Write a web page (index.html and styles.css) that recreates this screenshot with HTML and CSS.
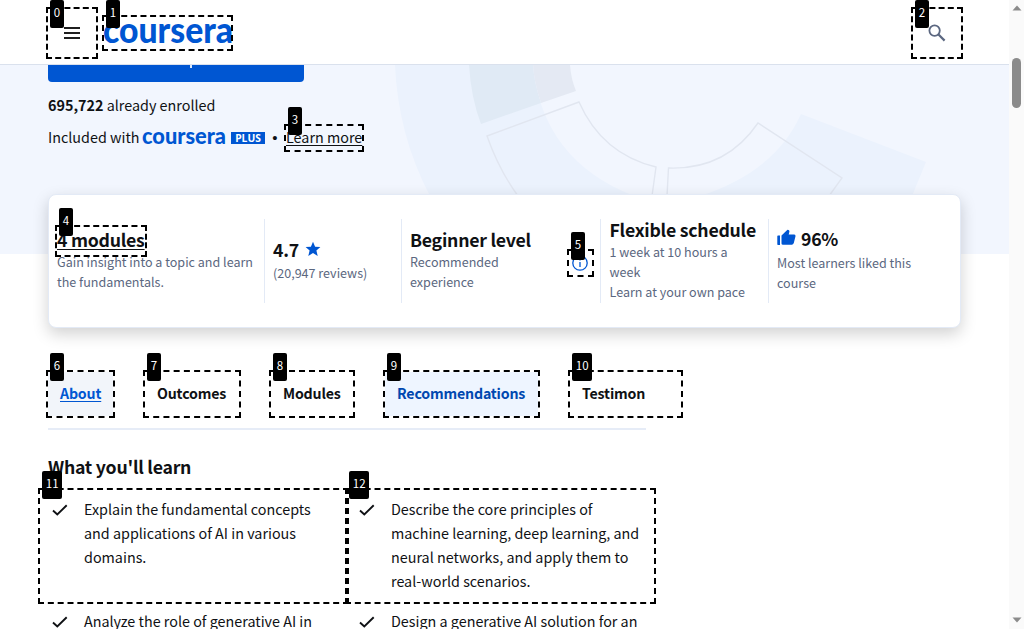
FILE: index.html
```html
<!DOCTYPE html>
<html lang="en">
<head>
<meta charset="utf-8">
<title>Course</title>
<link rel="stylesheet" href="styles.css">
</head>
<body>
<div class="window">
  <div class="page">
    <header class="header">
      <svg class="menu" width="18" height="14" viewBox="0 0 18 14"><path d="M1 2h16M1 7h16M1 12h16" stroke="#1f1f1f" stroke-width="1.8"/></svg>
      <svg class="logo" width="130" height="30"><text class="wordmark" x="-1" y="25" font-size="35.500" textLength="130" lengthAdjust="spacingAndGlyphs">coursera</text></svg>
      <svg class="search" width="18" height="18" viewBox="0 0 18 18" fill="none" stroke="#5b6780"><circle cx="6.6" cy="6.6" r="5.2" stroke-width="1.8"/><path d="M10.5 10.5L16.6 16.6" stroke-width="2.2"/></svg>
    </header>
    <section class="hero">
      <svg class="art" width="1009" height="189" viewBox="0 65 1009 189">
        <path d="M395 65Q398 135 430 196H634Q542 160 533 65Z" fill="#ebf2fd"/>
        <path d="M801 114L926 162 912 196H700Q775 172 801 114Z" fill="#ebf2fd"/>
        <path d="M469 65Q471 98 481 124L541 103Q534 82 533 65Z" fill="#e0eaf5"/>
        <path d="M533 65Q534 82 541 103L576 91Q571 79 570 65Z" fill="#e4e9f3"/>
        <g fill="none" stroke="#e1e6f0" stroke-width="1.4"><path d="M518 196Q499 170 487 136L579 102Q602 154 656 167L652 196M667 196L668.500 168Q726 170 758 123L842 178 829 196"/></g>
      </svg>
      <div class="enroll"><i class="stem"></i></div>
      <p class="line enrolled"><b>695,722</b> already enrolled</p>
      <p class="line included"><span class="inc">Included with</span>
        <svg class="small-logo" width="85" height="20"><text class="wordmark" x="0" y="16.500" font-size="23.500" textLength="84" lengthAdjust="spacingAndGlyphs">coursera</text></svg>
        <span class="plus">PLUS</span><span class="dot">•</span><a class="more">Learn more</a></p>
    </section>
    <section class="card">
      <div class="cell"><h3 class="modules">4 modules</h3><p>Gain insight into a topic and learn<br>the fundamentals.</p></div>
      <div class="cell"><h3 class="row">4.7 <svg width="16" height="16" viewBox="0 0 16 16"><path d="M8 .8l2.100 4.900 5.300.4-4 3.500 1.300 5.300L8 12.100l-4.700 2.800 1.300-5.300-4-3.500 5.300-.4z" fill="#0056d2"/></svg></h3><p class="down">(20,947 reviews)</p></div>
      <div class="cell"><h3>Beginner level</h3><div class="split"><p>Recommended<br>experience</p><svg class="info" width="16" height="16" viewBox="0 0 16 16"><circle cx="8" cy="8" r="7.200" fill="none" stroke="#0056d2" stroke-width="1.300"/><path d="M8 7v5M8 4v1.500" stroke="#0056d2" stroke-width="1.300"/></svg></div></div>
      <div class="cell flexible"><h3>Flexible schedule</h3><p>1 week at 10 hours a<br>week<br>Learn at your own pace</p></div>
      <div class="cell"><h3 class="row like"><svg width="19" height="17" viewBox="0 0 19 17" fill="#0056d2"><path d="M1 6.500h2v9.500H1Q.3 16 .3 15.300V7.200Q.3 6.500 1 6.500zM4.500 6.500L10.500.8Q13 1 12.300 3.300L11.700 5.500h5.600q1.400.1 1.200 1.800l-1.700 6.700q-.6 1.800-2 1.800H6q-1.500 0-1.500-1.400z"/></svg><span>96%</span></h3><p class="down">Most learners liked this<br>course</p></div>
    </section>
    <nav class="tabs">
      <a class="tab about">About</a><a class="tab outcomes">Outcomes</a><a class="tab mods">Modules</a><a class="tab recs">Recommendations</a><a class="tab test">Testimon</a>
    </nav>
    <section class="learn">
      <h2>What you'll learn</h2>
      <div class="points">
        <div class="point"><svg class="check" viewBox="0 0 16 12"><path d="M1 6.500L5.300 10.500 14.700 1.300"/></svg><p>Explain the fundamental concepts<br>and applications of AI in various<br>domains.</p></div>
        <div class="point"><svg class="check" viewBox="0 0 16 12"><path d="M1 6.500L5.300 10.500 14.700 1.300"/></svg><p>Describe the core principles of<br>machine learning, deep learning, and<br>neural networks, and apply them to<br>real-world scenarios.</p></div>
        <div class="point"><svg class="check" viewBox="0 0 16 12"><path d="M1 6.500L5.300 10.500 14.700 1.300"/></svg><p>Analyze the role of generative AI in</p></div>
        <div class="point"><svg class="check" viewBox="0 0 16 12"><path d="M1 6.500L5.300 10.500 14.700 1.300"/></svg><p>Design a generative AI solution for an</p></div>
      </div>
    </section>
  </div>
  <div class="scrollbar">
    <svg width="10" height="6" viewBox="0 0 10 6"><path d="M.5 5.500L5 .5l4.500 5z" fill="#8b8b8b"/></svg>
    <div class="thumb"></div>
    <svg width="10" height="6" viewBox="0 0 10 6"><path d="M.5.5L5 5.500 9.500.5z" fill="#8b8b8b"/></svg>
  </div>
  <div class="mark m0"><b class="high">0</b></div>
  <div class="mark m1"><b class="high">1</b></div>
  <div class="mark m2"><b class="high">2</b></div>
  <div class="mark m3"><b>3</b></div>
  <div class="mark m4"><b>4</b></div>
  <div class="mark m5"><b>5</b></div>
  <div class="mark m6"><b>6</b></div>
  <div class="mark m7"><b>7</b></div>
  <div class="mark m8"><b>8</b></div>
  <div class="mark m9"><b>9</b></div>
  <div class="mark m10"><b>10</b></div>
  <div class="mark m11"><b>11</b></div>
  <div class="mark m12"><b>12</b></div>
</div>
</body>
</html>
```
FILE: styles.css
```css
* { box-sizing: border-box; }
body { margin: 0; background: #fff; color: #0f1114; font-family: "Noto Sans CJK SC", "Noto Sans", sans-serif; font-size: 14.35px; line-height: 24px; }
p, h2, h3 { margin: 0; white-space: nowrap; }
svg { display: block; flex: none; overflow: visible; }
.window { position: relative; display: flex; width: 1024px; height: 629px; overflow: hidden; }
.page { width: 1009px; height: 629px; overflow: hidden; }
.header { display: flex; align-items: center; height: 65px; padding: 0 63px 0 63px; border-bottom: 1px solid #dae1ed; }
.menu, .search { margin-top: 2px; }
.logo { margin: 1px auto 0 23px; }
.wordmark { font-family: Lato, sans-serif; font-weight: 900; fill: #0056d2; }
.hero { position: relative; height: 189px; padding-left: 48px; background: #f2f6fe; }
.art { position: absolute; left: 0; top: 0; overflow: hidden; }
.enroll { position: relative; display: flex; justify-content: center; width: 256px; height: 17px; background: #0056d2; border-radius: 0 0 4px 4px; }
.stem { width: 2px; height: 3px; margin-left: 30px; background: #dce8fa; }
.line { position: relative; display: flex; align-items: center; height: 24px; white-space: pre; }
.enrolled { margin-top: 11px; }
.included { margin-top: 8px; }
.inc { width: 94px; }
.small-logo { width: 85px; }
.plus { width: 34px; height: 12px; margin: 1px 0 0 4px; background: #0056d2; color: #fff; font: bold 10.300px/12px "Open Sans", sans-serif; text-align: center; }
.dot { width: 20px; padding-top: 2px; font-family: "Liberation Sans", sans-serif; font-size: 15px; text-align: center; }
.more, .modules, .about { text-decoration: underline; text-underline-offset: 2px; }
.more { margin-left: 1px; }
.card { position: relative; display: grid; grid-template-columns: 215px 137px 199px 168px 1fr; width: 913px; height: 134px; margin: -60px 0 0 48px; padding: 24px 0; background: #fff; border: 1px solid #e3eaf6; border-radius: 8px; box-shadow: 0 6px 16px rgba(0,0,0,.18); }
.cell { display: flex; flex-direction: column; justify-content: center; height: 84px; padding-left: 8px; border-left: 1px solid #e3eaf6; }
.cell:first-child { border-left: 0; }
.flexible { padding-left: 8.5px; }
.cell p { margin-top: 1px; color: #5b6780; font-size: 12.550px; line-height: 20px; }
.cell h3, h2 { font-size: 17.700px; line-height: 24px; font-weight: 600; letter-spacing: -.25px; }
.cell h3 { margin-top: -3px; }
.cell .row { display: flex; align-items: center; gap: 6px; margin-top: -2px; }
.cell .down { padding-top: 1px; }
.cell .like { gap: 5px; margin-top: -3px; }
.cell .like + .down { padding-top: 2px; }
.like svg { margin-top: -2px; }
.split { display: flex; justify-content: space-between; padding-right: 12px; }
.info { margin-top: 4px; }
.tabs { display: flex; gap: 32px; width: 598px; height: 58px; margin: 44px 0 0 48px; overflow: hidden; border-bottom: 2px solid #e6ecf7; }
.tab { flex: none; height: 44px; padding: 0 12px; font-weight: 600; font-size: 14.200px; line-height: 42px; letter-spacing: -.18px; }
.about { width: 65px; background: #f2f5fa; color: #0056d2; }
.outcomes { width: 94px; }
.mods { width: 82px; }
.recs { width: 153px; background: #eef5ff; color: #0048b0; }
.test { width: 111px; }
.learn { padding: 24px 0 0 48px; }
.points { display: grid; grid-template-columns: 307px 307px; row-gap: 16px; padding-top: 19px; }
.point { display: flex; gap: 16px; }
.check { width: 16px; height: 12px; margin: 7px 0 0 4px; fill: none; stroke: #0f1114; stroke-width: 1.900; }
.scrollbar { display: flex; flex-direction: column; align-items: center; width: 15px; padding: 5px 0 6px; background: #fafafa; }
.thumb { width: 9px; height: 50px; margin: 47px 0 auto; border-radius: 5px; background: #8b8b8b; }
.mark { position: absolute; border: 2px dashed #000; }
.mark b { position: absolute; left: 2px; top: -19px; height: 28px; padding: 0 3.800px; border-radius: 2px; background: #000; color: #fff; font: 11.500px/25px "Noto Sans CJK SC", sans-serif; }
.mark .high { top: -9px; }
.m0 { left: 46px; top: 7px; width: 52px; height: 52px; }
.m1 { left: 102px; top: 15px; width: 131px; height: 36px; }
.mark.m1 .high { top: -17px; }
.m2 { left: 911px; top: 7px; width: 52px; height: 52px; }
.m3 { left: 284px; top: 124px; width: 80px; height: 28px; }
.m4 { left: 55px; top: 225px; width: 92px; height: 32px; }
.m5 { left: 567px; top: 249px; width: 27px; height: 28px; }
.m6 { left: 46px; top: 370px; width: 69px; height: 48px; }
.m7 { left: 143px; top: 370px; width: 98px; height: 48px; }
.m8 { left: 269px; top: 370px; width: 86px; height: 48px; }
.m9 { left: 383px; top: 370px; width: 157px; height: 48px; }
.m10 { left: 568px; top: 370px; width: 115px; height: 48px; }
.m11 { left: 38px; top: 488px; width: 311px; height: 116px; }
.m12 { left: 345px; top: 488px; width: 311px; height: 116px; }
```
